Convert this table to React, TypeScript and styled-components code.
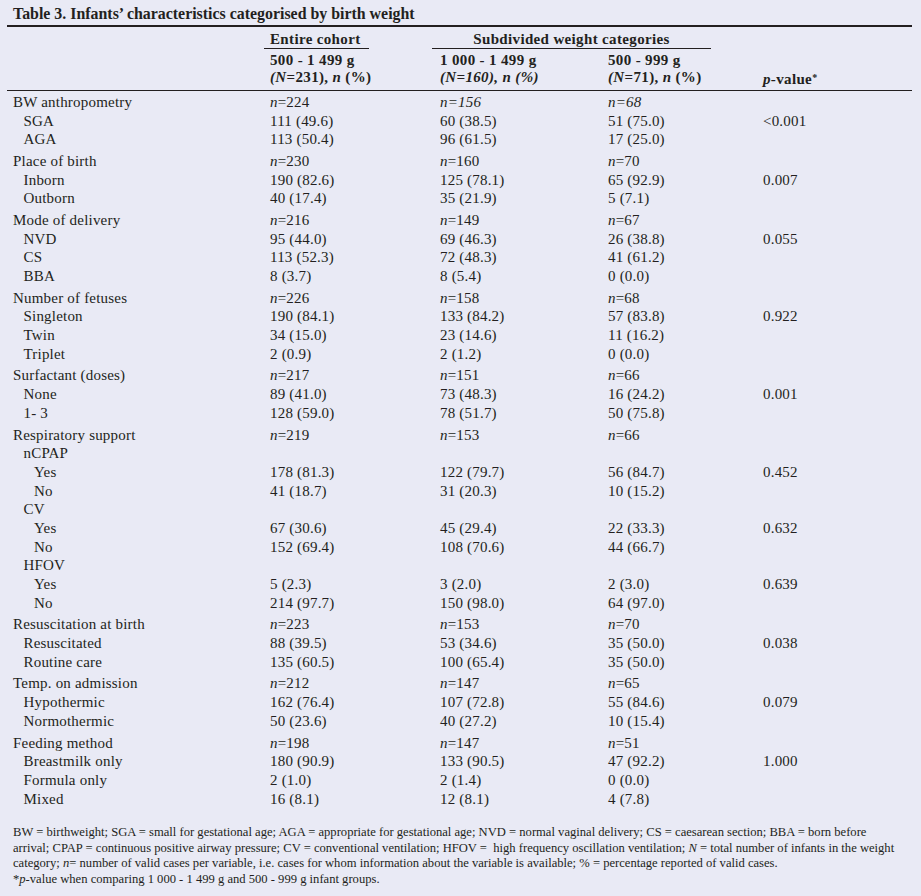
import { Fragment } from "react";
import styled, { createGlobalStyle } from "styled-components";

const GlobalStyle = createGlobalStyle`
  body {
    margin: 0;
    background: #e9eaf5;
    color: #231f20;
    font-family: "Liberation Serif", "Times New Roman", serif;
  }
`

type Row = {
    label: string
    level: number
    values?: string[]
    p?: string
    italic?: boolean
}

type Group = Row[]

const groups: Group[] = [
    [
        { label: 'BW anthropometry', level: 0, values: ['n=224', 'n=156', 'n=68'], italic: true },
        { label: 'SGA', level: 1, values: ['111 (49.6)', '60 (38.5)', '51 (75.0)'], p: '<0.001' },
        { label: 'AGA', level: 1, values: ['113 (50.4)', '96 (61.5)', '17 (25.0)'] },
    ],
    [
        { label: 'Place of birth', level: 0, values: ['n=230', 'n=160', 'n=70'] },
        { label: 'Inborn', level: 1, values: ['190 (82.6)', '125 (78.1)', '65 (92.9)'], p: '0.007' },
        { label: 'Outborn', level: 1, values: ['40 (17.4)', '35 (21.9)', '5 (7.1)'] },
    ],
    [
        { label: 'Mode of delivery', level: 0, values: ['n=216', 'n=149', 'n=67'] },
        { label: 'NVD', level: 1, values: ['95 (44.0)', '69 (46.3)', '26 (38.8)'], p: '0.055' },
        { label: 'CS', level: 1, values: ['113 (52.3)', '72 (48.3)', '41 (61.2)'] },
        { label: 'BBA', level: 1, values: ['8 (3.7)', '8 (5.4)', '0 (0.0)'] },
    ],
    [
        { label: 'Number of fetuses', level: 0, values: ['n=226', 'n=158', 'n=68'] },
        { label: 'Singleton', level: 1, values: ['190 (84.1)', '133 (84.2)', '57 (83.8)'], p: '0.922' },
        { label: 'Twin', level: 1, values: ['34 (15.0)', '23 (14.6)', '11 (16.2)'] },
        { label: 'Triplet', level: 1, values: ['2 (0.9)', '2 (1.2)', '0 (0.0)'] },
    ],
    [
        { label: 'Surfactant (doses)', level: 0, values: ['n=217', 'n=151', 'n=66'] },
        { label: 'None', level: 1, values: ['89 (41.0)', '73 (48.3)', '16 (24.2)'], p: '0.001' },
        { label: '1- 3', level: 1, values: ['128 (59.0)', '78 (51.7)', '50 (75.8)'] },
    ],
    [
        { label: 'Respiratory support', level: 0, values: ['n=219', 'n=153', 'n=66'] },
        { label: 'nCPAP', level: 1 },
        { label: 'Yes', level: 2, values: ['178 (81.3)', '122 (79.7)', '56 (84.7)'], p: '0.452' },
        { label: 'No', level: 2, values: ['41 (18.7)', '31 (20.3)', '10 (15.2)'] },
        { label: 'CV', level: 1 },
        { label: 'Yes', level: 2, values: ['67 (30.6)', '45 (29.4)', '22 (33.3)'], p: '0.632' },
        { label: 'No', level: 2, values: ['152 (69.4)', '108 (70.6)', '44 (66.7)'] },
        { label: 'HFOV', level: 1 },
        { label: 'Yes', level: 2, values: ['5 (2.3)', '3 (2.0)', '2 (3.0)'], p: '0.639' },
        { label: 'No', level: 2, values: ['214 (97.7)', '150 (98.0)', '64 (97.0)'] },
    ],
    [
        { label: 'Resuscitation at birth', level: 0, values: ['n=223', 'n=153', 'n=70'] },
        { label: 'Resuscitated', level: 1, values: ['88 (39.5)', '53 (34.6)', '35 (50.0)'], p: '0.038' },
        { label: 'Routine care', level: 1, values: ['135 (60.5)', '100 (65.4)', '35 (50.0)'] },
    ],
    [
        { label: 'Temp. on admission', level: 0, values: ['n=212', 'n=147', 'n=65'] },
        { label: 'Hypothermic', level: 1, values: ['162 (76.4)', '107 (72.8)', '55 (84.6)'], p: '0.079' },
        { label: 'Normothermic', level: 1, values: ['50 (23.6)', '40 (27.2)', '10 (15.4)'] },
    ],
    [
        { label: 'Feeding method', level: 0, values: ['n=198', 'n=147', 'n=51'] },
        { label: 'Breastmilk only', level: 1, values: ['180 (90.9)', '133 (90.5)', '47 (92.2)'], p: '1.000' },
        { label: 'Formula only', level: 1, values: ['2 (1.0)', '2 (1.4)', '0 (0.0)'] },
        { label: 'Mixed', level: 1, values: ['16 (8.1)', '12 (8.1)', '4 (7.8)'] },
    ],
]

function Value({ text, italic }: { text: string, italic?: boolean }) {
    if (text.startsWith('n=')) {
        if (italic) return <em>{text}</em>
        return <><em>n</em>{text.slice(1)}</>
    }
    return <>{text}</>
}

export default function App() {
    return (
        <Page>
            <GlobalStyle />
            <Title>Table 3. Infants’ characteristics categorised by birth weight</Title>
            <Table>
                <HeadGrid>
                    <span />
                    <GroupHead><Underlined $width={105}>Entire cohort</Underlined></GroupHead>
                    <GroupHead $span={2}><Underlined $width={279} $center>Subdivided weight categories</Underlined></GroupHead>
                    <span />
                    <span />
                    <SubHead>500 - 1 499 g<br /><em>(N</em>=231), <em>n</em> (%)</SubHead>
                    <SubHead>1 000 - 1 499 g<br /><em>(N=160), n (%)</em></SubHead>
                    <SubHead>500 - 999 g<br /><em>(N</em>=71), <em>n</em> (%)</SubHead>
                    <SubHead><br /><em>p</em>-value<Star>*</Star></SubHead>
                </HeadGrid>
                <Body>
                    {groups.map((group, gi) => (
                        <GroupBlock key={gi} $first={gi === 0}>
                            {group.map((row, ri) => (
                                <Fragment key={ri}>
                                    <Label $level={row.level}>{row.label}</Label>
                                    {[0, 1, 2].map(ci => (
                                        <Cell key={ci}>
                                            {row.values && <Value text={row.values[ci]} italic={row.italic && ci > 0} />}
                                        </Cell>
                                    ))}
                                    <Cell>{row.p ?? ''}</Cell>
                                </Fragment>
                            ))}
                        </GroupBlock>
                    ))}
                </Body>
            </Table>
            <Notes>
                BW = birthweight; SGA = small for gestational age; AGA = appropriate for gestational age; NVD = normal vaginal delivery; CS = caesarean section; BBA = born before<br />
                arrival; CPAP = continuous positive airway pressure; CV = conventional ventilation; HFOV =&nbsp; high frequency oscillation ventilation; <em>N</em> = total number of infants in the weight<br />
                category; <em>n</em>= number of valid cases per variable, i.e. cases for whom information about the variable is available; % = percentage reported of valid cases.<br />
                *<em>p</em>-value when comparing 1 000 - 1 499 g and 500 - 999 g infant groups.
            </Notes>
        </Page>
    )
}

const columns = '257px 170px 168px 155px 155px'

const Page = styled.div`
    width: 905px;
    padding: 5px 0 0 7px;
`

const Title = styled.h1`
    margin: 0;
    padding-left: 6px;
    font-size: 15.9px;
    line-height: 18px;
    font-weight: bold;
    height: 20px;
`

const Table = styled.div`
    border-top: 2px solid #231f20;
`

const HeadGrid = styled.div`
    display: grid;
    grid-template-columns: ${columns};
    font-size: 15px;
    letter-spacing: 0.35px;
    font-weight: bold;
    line-height: 17px;
    border-bottom: 1px solid #231f20;
    padding: 4px 0 2px;
`

const GroupHead = styled.div<{ $span?: number }>`
    grid-column: span ${p => p.$span ?? 1};
    padding-bottom: 3px;
`

const Underlined = styled.div<{ $width: number, $center?: boolean }>`
    width: ${p => p.$width}px;
    margin-left: ${p => p.$center ? '-2px' : '0'};
    padding-left: ${p => p.$center ? '0' : '6px'};
    box-sizing: border-box;
    text-align: ${p => p.$center ? 'center' : 'left'};
    border-bottom: 1px solid #231f20;
`

const SubHead = styled.div`
    padding-left: 6px;
    white-space: nowrap;
`

const Star = styled.span`
    font-size: 10px;
    vertical-align: 3px;
`

const Body = styled.div`
    padding-top: 2px;
`

const GroupBlock = styled.div<{ $first: boolean }>`
    display: grid;
    grid-template-columns: ${columns};
    grid-auto-rows: 18.7px;
    align-items: center;
    font-size: 15px;
    letter-spacing: 0.2px;
    margin-top: ${p => p.$first ? '0' : '3px'};
`

const Cell = styled.div`
    padding-left: 6px;
    white-space: nowrap;
`

const Label = styled(Cell)<{ $level: number }>`
    padding-left: ${p => 6 + p.$level * 10.5}px;
`

const Notes = styled.p`
    margin: 17px 0 0;
    padding-left: 6px;
    font-size: 12.6px;
    line-height: 15.4px;
    white-space: nowrap;
`
